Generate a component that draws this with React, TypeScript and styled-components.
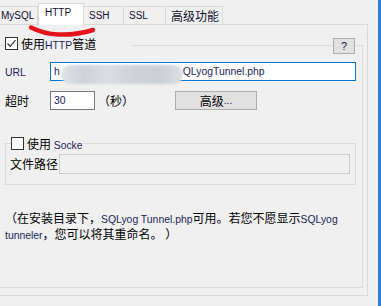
import React from 'react';
import styled, { createGlobalStyle } from 'styled-components';

const GlobalStyle = createGlobalStyle`
  html, body { margin: 0; padding: 0; background: #f0f0f0; }
  body {
    font-family: "Noto Sans CJK SC", "Noto Sans", sans-serif;
    font-size: 12px;
    color: #000;
  }
`;

const Window = styled.div`
  position: relative;
  width: 381px;
  height: 306px;
  overflow: hidden;
  display: flex;
  background: #f0f0f0;
`;

const Main = styled.div`
  flex: 1;
  display: flex;
  flex-direction: column;
`;

const BlueEdge = styled.div`
  width: 3px;
  background: #2b7fd4;
`;

const TabStrip = styled.div`
  height: 24px;
  display: flex;
  align-items: flex-end;
`;

const Tab = styled.div<{ $w: number; $active?: boolean; $first?: boolean; $cjk?: boolean }>`
  box-sizing: border-box;
  width: ${p => p.$w}px;
  height: ${p => (p.$active ? 22 : 18)}px;
  margin-bottom: ${p => (p.$active ? -1 : 0)}px;
  margin-left: ${p => (p.$first ? -4 : 0)}px;
  position: relative;
  z-index: ${p => (p.$active ? 1 : 0)};
  background: ${p => (p.$active ? '#ffffff' : '#f0f0f0')};
  border-top: 1px solid #d9d9d9;
  border-right: 1px solid #d9d9d9;
  border-left: ${p => (p.$active ? '1px solid #d9d9d9' : 'none')};
  display: flex;
  align-items: center;
  padding-left: ${p => (p.$active ? 6 : 5)}px;
  padding-bottom: ${p => (p.$active ? 4 : 0)}px;
  font-family: ${p => (p.$cjk ? '"Noto Sans CJK SC", sans-serif' : '"Liberation Sans", Arial, sans-serif')};
  font-size: ${p => (p.$cjk ? 12 : 10)}px;
  color: #101030;
  line-height: 1;
  white-space: nowrap;
`;

const TabPage = styled.div`
  box-sizing: border-box;
  width: 368px;
  height: 272px;
  border-top: 1px solid #d9d9d9;
  border-right: 1px solid #d9d9d9;
  border-bottom: 1px solid #d9d9d9;
  padding-top: 20px;
`;

const Group = styled.div`
  box-sizing: border-box;
  width: 363px;
  height: 243px;
  border-top: 1px solid #dcdcdc;
  border-right: 1px solid #dcdcdc;
  border-bottom: 1px solid #dcdcdc;
  display: flex;
  flex-direction: column;
`;

const GroupHeader = styled.div<{ $mt: number; $pl: number }>`
  height: 13px;
  margin-top: ${p => p.$mt}px;
  padding-left: ${p => p.$pl}px;
  padding-right: 7px;
  display: flex;
  align-items: flex-start;
`;

const CheckBox = styled.div`
  box-sizing: border-box;
  width: 13px;
  height: 13px;
  border: 1px solid #333333;
  background: #ffffff;
  flex-shrink: 0;
  display: flex;
  align-items: center;
  justify-content: center;
`;

const CheckLabel = styled.div<{ $pr?: number; $w?: number }>`
  margin-left: 3px;
  height: 13px;
  line-height: 13px;
  background: #f0f0f0;
  padding-right: ${p => p.$pr ?? 0}px;
  white-space: nowrap;
  overflow: hidden;
  ${p => (p.$w ? `width: ${p.$w}px;` : '')}
`;

const Spacer = styled.div`
  flex: 1;
`;

const HelpButton = styled.div`
  box-sizing: border-box;
  width: 22px;
  height: 16px;
  margin-top: 1px;
  background: #e1e1e1;
  border: 1px solid #adadad;
  display: flex;
  align-items: center;
  justify-content: center;
  font-family: "Liberation Sans", Arial, sans-serif;
  font-size: 11px;
  line-height: 1;
  color: #2a1440;
`;

const Row = styled.div<{ $mt: number; $pl: number }>`
  display: flex;
  align-items: center;
  margin-top: ${p => p.$mt}px;
  padding-left: ${p => p.$pl}px;
`;

const FieldLabel = styled.div<{ $w: number }>`
  width: ${p => p.$w}px;
  flex-shrink: 0;
  white-space: nowrap;
  line-height: 14px;
`;

const Field = styled.div<{ $w: number; $h: number; $border: string; $bg: string }>`
  box-sizing: border-box;
  width: ${p => p.$w}px;
  height: ${p => p.$h}px;
  border: 1px solid ${p => p.$border};
  background: ${p => p.$bg};
  padding-left: 3px;
  display: flex;
  align-items: center;
  white-space: nowrap;
  position: relative;
`;

const Blur = styled.span`
  display: inline-block;
  flex-shrink: 0;
  width: 122px;
  height: 19px;
  margin-top: 5px;
  margin-left: 1px;
  border-radius: 9px;
  background: linear-gradient(
    90deg,
    #dfe2e6 0%,
    #cfd3d9 18%,
    #dadde2 38%,
    #d0d4da 58%,
    #cbcfd6 82%,
    #dde0e4 100%
  );
  filter: blur(1.2px);
`;

const UnitText = styled.div`
  width: 77px;
  margin-left: 3px;
  white-space: nowrap;
`;

const PushButton = styled.div`
  box-sizing: border-box;
  width: 82px;
  height: 19px;
  background: #e1e1e1;
  border: 1px solid #adadad;
  display: flex;
  align-items: center;
  justify-content: center;
`;

const SubGroup = styled.div`
  box-sizing: border-box;
  width: 351px;
  height: 42px;
  margin-top: 33px;
  margin-left: 5px;
  border: 1px solid #dcdcdc;
  display: flex;
  flex-direction: column;
`;

const Note = styled.div`
  margin-top: 26px;
  padding-left: 5px;
  line-height: 14px;
  white-space: nowrap;
`;

const Lat = styled.span`
  font-family: "Liberation Sans", Arial, sans-serif;
  font-size: 10.4px;
  color: #1b1f5c;
`;

const Scribble = styled.svg`
  position: absolute;
  left: 0;
  top: 0;
  pointer-events: none;
  z-index: 5;
`;

const Check = () => (
  <svg width="11" height="11" viewBox="0 0 11 11">
    <path d="M1.5 5.5 L4.2 8.3 L9.5 2.2" fill="none" stroke="#333" strokeWidth="1.2" />
  </svg>
);

export default function App() {
  return (
    <>
      <GlobalStyle />
      <Window>
        <Main>
          <TabStrip>
            <Tab $w={42} $first>MySQL</Tab>
            <Tab $w={46} $active>HTTP</Tab>
            <Tab $w={40}>SSH</Tab>
            <Tab $w={42}>SSL</Tab>
            <Tab $w={57} $cjk>高级功能</Tab>
          </TabStrip>
          <TabPage>
            <Group>
              <GroupHeader $mt={-9} $pl={5}>
                <CheckBox>
                  <Check />
                </CheckBox>
                <CheckLabel $pr={35}>
                  使用<Lat>HTTP</Lat>管道
                </CheckLabel>
                <Spacer />
                <HelpButton>?</HelpButton>
              </GroupHeader>

              <Row $mt={12} $pl={5}>
                <FieldLabel $w={45}>
                  <Lat>URL</Lat>
                </FieldLabel>
                <Field $w={306} $h={19} $border="#0078d7" $bg="#ffffff">
                  <Lat>h</Lat>
                  <Blur />
                  <Lat>QLyogTunnel.php</Lat>
                </Field>
              </Row>

              <Row $mt={10} $pl={5}>
                <FieldLabel $w={45}>超时</FieldLabel>
                <Field $w={45} $h={19} $border="#7a7a7a" $bg="#ffffff">
                  <Lat>30</Lat>
                </Field>
                <UnitText>（秒）</UnitText>
                <PushButton>
                  高级<Lat>...</Lat>
                </PushButton>
              </Row>

              <SubGroup>
                <GroupHeader $mt={-7} $pl={5}>
                  <CheckBox />
                  <CheckLabel $w={55}>
                    使用 <Lat>Socket</Lat>
                  </CheckLabel>
                </GroupHeader>
                <Row $mt={4} $pl={4}>
                  <FieldLabel $w={49}>文件路径</FieldLabel>
                  <Field $w={291} $h={20} $border="#cccccc" $bg="#f0f0f0" />
                </Row>
              </SubGroup>

              <Note>
                （在安装目录下，<Lat>SQLyog Tunnel.php</Lat>可用。若您不愿显示<Lat>SQLyog</Lat>
                <br />
                <Lat>tunneler</Lat>，您可以将其重命名。 ）
              </Note>
            </Group>
          </TabPage>
        </Main>
        <BlueEdge />
        <Scribble width="381" height="306" viewBox="0 0 381 306">
          <path
            d="M31 27.5 C 38 31, 46 34, 58 34.5 C 70 35, 82 33.5, 93 30"
            fill="none"
            stroke="#e5141b"
            strokeWidth="4.5"
            strokeLinecap="round"
          />
        </Scribble>
      </Window>
    </>
  );
}
